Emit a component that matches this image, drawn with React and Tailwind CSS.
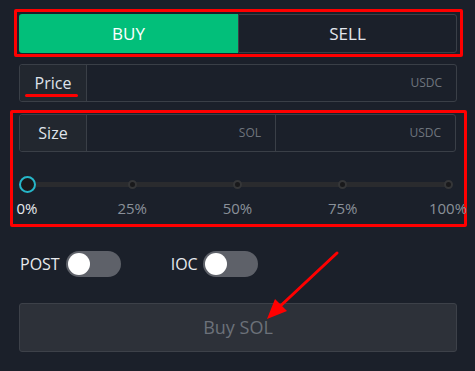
import React from "react";

function Toggle() {
  return (
    <div className="w-[55px] h-[26px] rounded-full bg-[#5e6169] flex items-center px-[2px]">
      <div className="w-[22px] h-[22px] rounded-full bg-white"></div>
    </div>
  );
}

export default function App() {
  const marks = ["0%", "25%", "50%", "75%", "100%"];
  return (
    <div className="relative w-[475px] h-[371px] bg-[#1b202a] overflow-hidden font-['Open_Sans',sans-serif]">
      <div className="pt-[9px]">
        {/* Buy / Sell */}
        <div className="ml-[14px] w-[449px] h-[48px] border-[3px] border-[#ff0000] rounded-[2px] pl-[2px] pr-[3px] pt-[2px] pb-[1px] flex">
          <div className="w-[219px] h-full bg-[#02bf7a] rounded-l-[3px] flex items-center justify-center text-[17px] text-white">BUY</div>
          <div className="flex-1 h-full border border-[#3a3f47] rounded-r-[3px] flex items-center justify-center text-[17px] text-[#e3e7ee]">SELL</div>
        </div>

        {/* Price */}
        <div className="mt-[7px] ml-[19px] w-[438px] h-[38px] border border-[#3a3f47] rounded-[3px] flex">
          <div className="relative w-[67px] h-full bg-[#22272f] border-r border-[#3a3f47] rounded-l-[3px] flex items-center justify-center text-[16px] text-[#dfe3ea]">
            Price
            <div className="absolute left-[5px] top-[29px] w-[53px] h-[3px] rounded-full bg-[#ff0000]"></div>
          </div>
          <div className="flex-1 flex items-center justify-end pr-[14px] text-[12px] text-[#6f757e]">USDC</div>
        </div>

        {/* Size + slider */}
        <div className="mt-[8px] ml-[10px] w-[457px] h-[117px] border-[3px] border-[#ff0000] rounded-[2px] pl-[6px] pr-[8px] pt-[1px]">
          <div className="w-[437px] h-[38px] border border-[#3a3f47] rounded-[3px] flex">
            <div className="w-[67px] h-full bg-[#22272f] border-r border-[#3a3f47] rounded-l-[3px] flex items-center justify-center text-[16px] text-[#dfe3ea]">Size</div>
            <div className="w-[189px] h-full border-r border-[#3a3f47] flex items-center justify-end pr-[14px] text-[12px] text-[#6f757e]">SOL</div>
            <div className="flex-1 flex items-center justify-end pr-[14px] text-[12px] text-[#6f757e]">USDC</div>
          </div>

          <div className="px-[8px] mt-[24px]">
            <div className="relative h-[16px] flex items-center">
              <div className="absolute left-0 right-0 h-[5px] bg-[#2a2b2e]"></div>
              <div className="relative w-full flex justify-between items-center">
                {marks.map((m, i) => (
                  <div key={m} className="w-0 flex justify-center">
                    {i === 0 ? (
                      <div className="shrink-0 w-[17px] h-[17px] rounded-full border-2 border-[#26b6c9] bg-[#19191b]"></div>
                    ) : (
                      <div className="shrink-0 w-[9px] h-[9px] rounded-full border-2 border-[#353638] bg-[#19191b]"></div>
                    )}
                  </div>
                ))}
              </div>
            </div>
            <div className="mt-[6px] flex justify-between">
              {marks.map((m, i) => (
                <div key={m} className="w-0 flex justify-center">
                  <span className={`shrink-0 text-[15px] leading-[20px] ${i === 0 ? "text-[#e8eaee]" : "text-[#8a9099]"}`}>{m}</span>
                </div>
              ))}
            </div>
          </div>
        </div>

        {/* Toggles */}
        <div className="mt-[24px] ml-[20px] flex items-center h-[26px]">
          <span className="text-[16px] text-[#e8eaee] mr-[6px]">POST</span>
          <Toggle />
          <span className="ml-[50px] text-[16px] text-[#e8eaee] mr-[5px]">IOC</span>
          <Toggle />
        </div>

        {/* Submit */}
        <div className="mt-[26px] ml-[19px] w-[438px] h-[49px] bg-[#2d3139] border border-[#3d4149] rounded-[3px] flex items-center justify-center text-[18px] text-[#6c717a]">
          Buy SOL
        </div>
      </div>

      {/* annotation arrow */}
      <svg className="absolute left-0 top-0" width="475" height="371" viewBox="0 0 475 371">
        <line x1="337" y1="253" x2="275" y2="311" stroke="#ff0000" strokeWidth="3" strokeLinecap="round" />
        <polygon points="267,319 275,299 287,311" fill="#ff0000" />
      </svg>
    </div>
  );
}
